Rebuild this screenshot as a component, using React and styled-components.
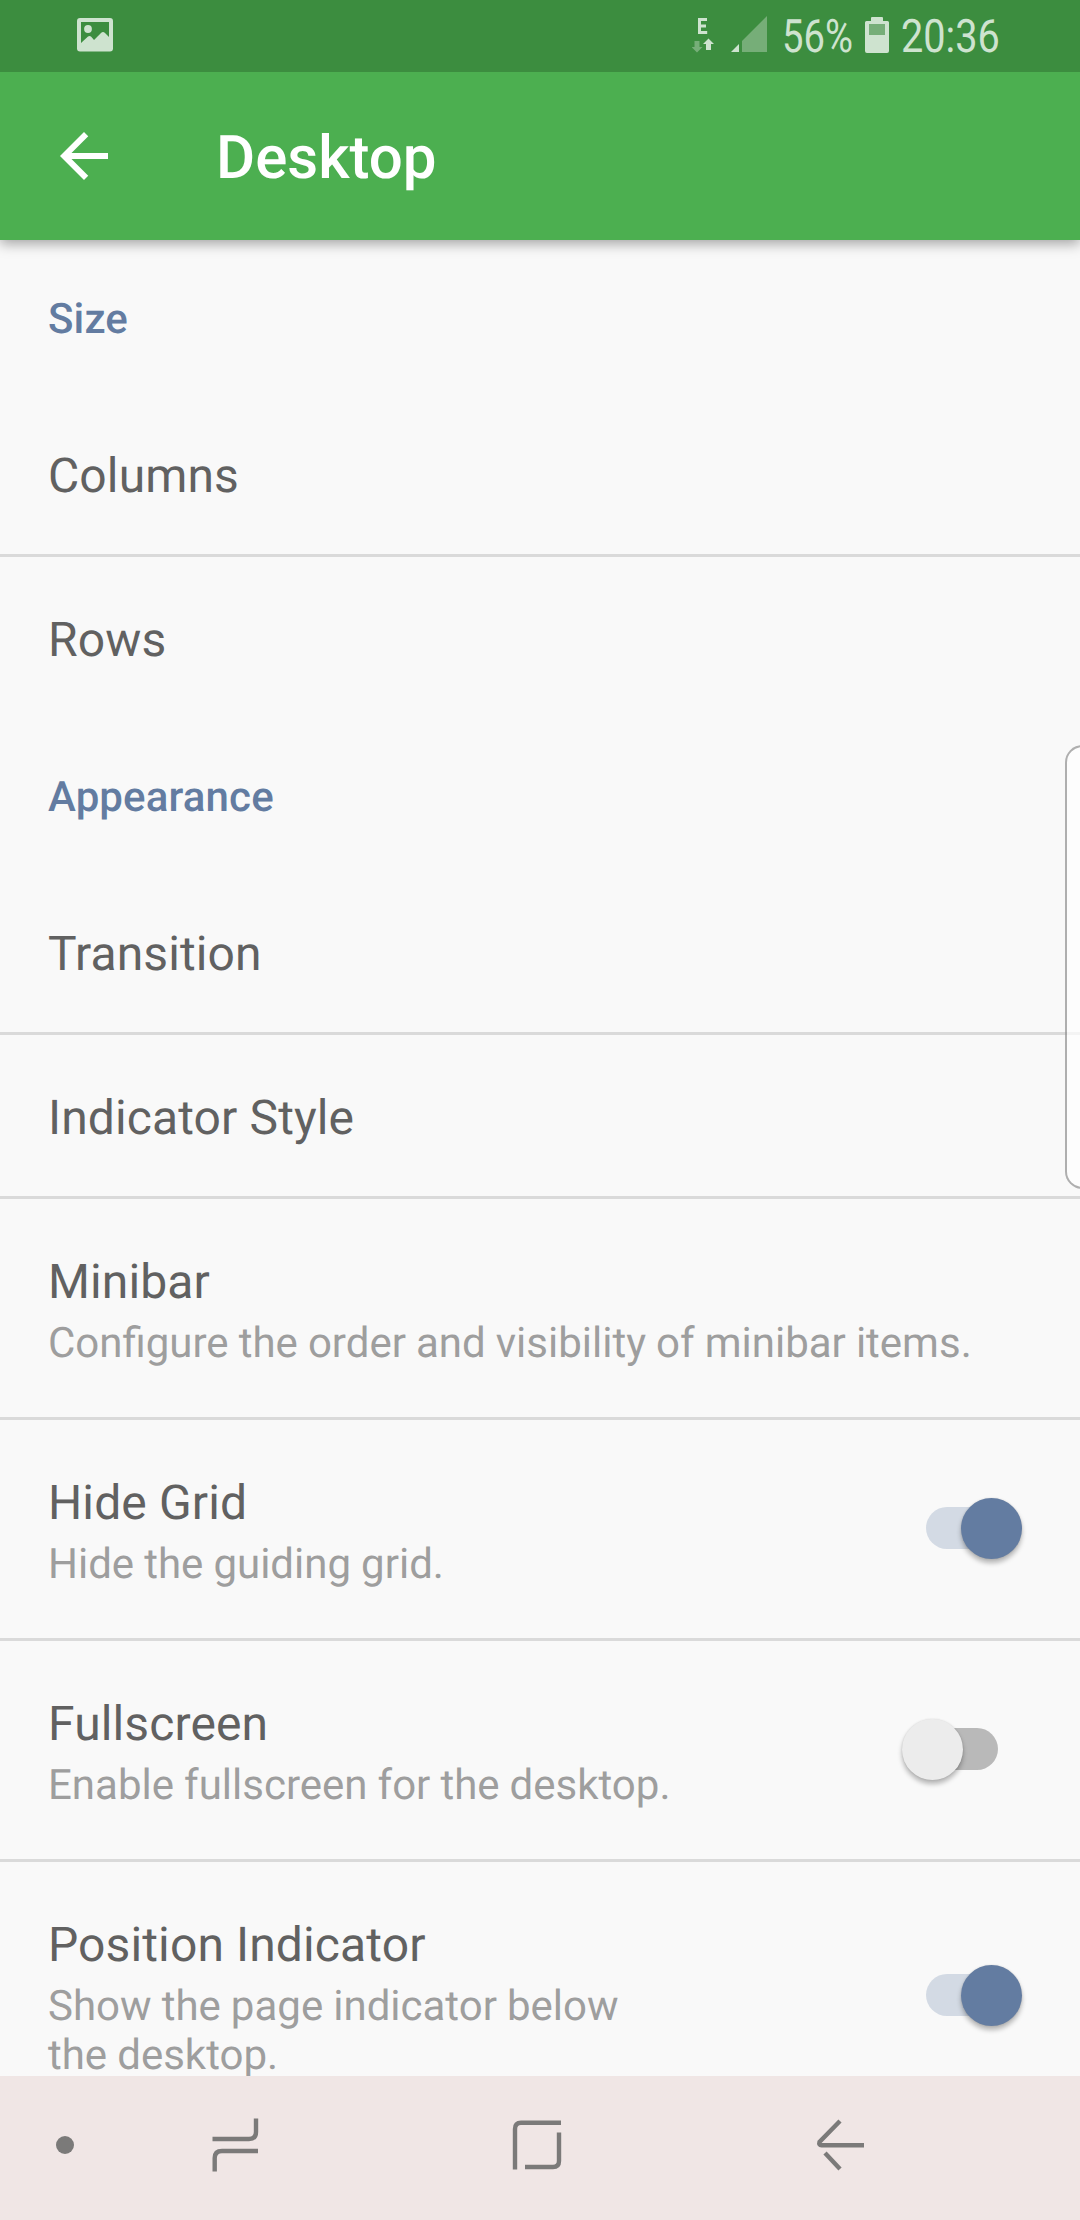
import React from 'react';
import styled, { createGlobalStyle } from 'styled-components';

const Global = createGlobalStyle`
  *, *::before, *::after { box-sizing: border-box; }
  body {
    margin: 0;
    background: #f9f9f9;
    font-family: Roboto, 'Liberation Sans', sans-serif;
    text-rendering: geometricPrecision;
  }
`;

const Screen = styled.div`
  position: relative;
  display: flex;
  flex-direction: column;
  width: 1080px;
  height: 2220px;
  overflow: hidden;
  background: #f9f9f9;
`;

const StatusBar = styled.header`
  display: flex;
  flex: none;
  align-items: flex-start;
  justify-content: space-between;
  height: 72px;
  padding: 0 81px 0 77px;
  background: #3c8d3f;
`;

const StatusGroup = styled.div`
  display: flex;
  align-items: flex-start;
  height: 72px;
`;

const StatusIcon = styled.svg`
  display: block;
  flex: none;
  width: ${p => p.width}px;
  height: 72px;
  margin-right: ${p => p.$gap || 0}px;
`;

const StatusText = styled.span`
  display: block;
  width: ${p => p.$width}px;
  margin-right: ${p => p.$gap || 0}px;
  padding-top: 10px;
  color: #cee3cf;
  font-size: 46px;
  line-height: 54px;
  white-space: nowrap;
  transform: scaleX(${p => p.$squeeze});
  transform-origin: left center;
`;

const AppBar = styled.div`
  position: relative;
  z-index: 1;
  display: flex;
  flex: none;
  align-items: center;
  height: 168px;
  padding: 0 48px;
  background: #4caf50;
  box-shadow: 0 4px 12px rgba(0, 0, 0, 0.34);
  clip-path: inset(0 0 -30px 0);
`;

const BackIcon = styled.svg`
  display: block;
  width: 72px;
  height: 72px;
  margin-right: 96px;
  fill: #fff;
`;

const Title = styled.h1`
  margin: 4px 0 0;
  color: #fff;
  font-size: 60px;
  font-weight: 500;
  line-height: 70px;
`;

const Content = styled.main`
  flex: 1;
  min-height: 0;
  overflow: hidden;
`;

const Category = styled.h2`
  height: 153px;
  margin: 0;
  padding: 55px 48px 0;
  color: #637ca1;
  font-size: 42px;
  font-weight: 500;
  line-height: 49px;
  letter-spacing: 0.14px;
`;

const Item = styled.div`
  display: flex;
  align-items: center;
  justify-content: space-between;
  box-sizing: content-box;
  height: ${p => p.$height}px;
  padding: 0 48px;
  border-top: ${p => (p.$first ? 'none' : '3px solid #dadada')};
`;

const Labels = styled.div`
  align-self: flex-start;
  padding-top: 54px;
`;

const ItemTitle = styled.div`
  color: #616161;
  font-size: 48px;
  line-height: 57px;
  letter-spacing: 0.12px;
`;

const Summary = styled.div`
  max-width: ${p => (p.$narrow ? '600px' : 'none')};
  margin-top: 9px;
  color: #9e9e9e;
  font-size: 42px;
  line-height: 49px;
  word-spacing: -0.35px;
`;

const Track = styled.div`
  display: flex;
  align-items: center;
  justify-content: ${p => (p.$on ? 'flex-end' : 'flex-start')};
  width: 72px;
  height: 42px;
  margin: 0 34px 2px 0;
  border-radius: 21px;
  background: ${p => (p.$on ? '#d3dae4' : '#b9b9b9')};
`;

const Thumb = styled.div`
  flex: none;
  width: 61px;
  height: 61px;
  margin: 0 -24px;
  border-radius: 50%;
  background: ${p => (p.$on ? '#637ca1' : '#ececec')};
  box-shadow: 0 4px 5px rgba(0, 0, 0, 0.28), 0 0 2px rgba(0, 0, 0, 0.12);
`;

const EdgeHandle = styled.div`
  position: absolute;
  top: 745px;
  right: -20px;
  width: 35px;
  height: 444px;
  border: 2px solid rgba(150, 150, 150, 0.75);
  border-radius: 20px;
  background: rgba(255, 255, 255, 0.7);
  background-clip: padding-box;
`;

const NavBar = styled.nav`
  flex: none;
  height: 144px;
  background: #f0e6e5;
`;

const NavIcons = styled.svg`
  display: block;
  fill: none;
  stroke: #7b7a79;
  stroke-width: 4.4;
`;

function Preference({ title, summary, narrow, height = 161, first, toggle }) {
  const on = toggle === 'on';
  return (
    <Item $height={height} $first={first}>
      <Labels>
        <ItemTitle>{title}</ItemTitle>
        {summary && <Summary $narrow={narrow}>{summary}</Summary>}
      </Labels>
      {toggle && <Track $on={on}><Thumb $on={on} /></Track>}
    </Item>
  );
}

export default function App() {
  return (
    <Screen>
      <Global />
      <StatusBar>
        <StatusIcon width={36} viewBox="0 0 36 72" fill="#cee3cf">
          <path fillRule="evenodd" d="M3 18H33Q36 18 36 21V48.500Q36 51.500 33 51.500H3Q0 51.500 0 48.500V21Q0 18 3 18ZM4 22V43L11 36.5Q12.5 35.3 14 36.5L17 40L24 33Q26 31.200 28 33L32 37V22Z" />
          <circle cx="11" cy="29" r="3.900" />
        </StatusIcon>
        <StatusGroup>
          <StatusIcon width={22} $gap={17} viewBox="0 0 22 72" fill="#cee3cf">
            <path d="M6 18H15V21H9V24.500H14V27.500H9V31H15.200V34H6Z" />
            <path fill="#76ae78" d="M2.500 41H7.500V47H10.500L5 52.500L-.5 47H2.500Z" />
            <path d="M14 50V44H11L16.500 38.500L22 44H19V50Z" />
          </StatusIcon>
          <StatusIcon width={36} $gap={15} viewBox="0 0 36 72">
            <path fill="#cee3cf" d="M0 52L8 44V52Z" />
            <path fill="#76ae78" d="M11 52V41L36 16V52Z" />
          </StatusIcon>
          <StatusText $width={70} $gap={13} $squeeze={0.83}>56%</StatusText>
          <StatusIcon width={24} $gap={12} viewBox="0 0 24 72">
            <path fill="#cee3cf" d="M7 17H17Q18 17 18 18V21H22.500Q24 21 24 22.500V51Q24 53 22 53H2Q0 53 0 51V22.500Q0 21 1.500 21H6V18Q6 17 7 17Z" />
            <path fill="#76ae78" d="M4 24H20V35H4Z" />
          </StatusIcon>
          <StatusText $width={98} $squeeze={0.862}>20:36</StatusText>
        </StatusGroup>
      </StatusBar>
      <AppBar>
        <BackIcon viewBox="0 0 24 24">
          <path d="M20 11H7.830l5.590-5.590L12 4l-8 8 8 8 1.410-1.410L7.830 13H20v-2z" />
        </BackIcon>
        <Title>Desktop</Title>
      </AppBar>
      <Content>
        <Category>Size</Category>
        <Preference title="Columns" first />
        <Preference title="Rows" />
        <Category>Appearance</Category>
        <Preference title="Transition" first />
        <Preference title="Indicator Style" />
        <Preference title="Minibar" height={218} summary="Configure the order and visibility of minibar items." />
        <Preference title="Hide Grid" height={218} summary="Hide the guiding grid." toggle="on" />
        <Preference title="Fullscreen" height={218} summary="Enable fullscreen for the desktop." toggle="off" />
        <Preference title="Position Indicator" height={268} summary="Show the page indicator below the desktop." narrow toggle="on" />
      </Content>
      <NavBar>
        <NavIcons width="1080" height="144" viewBox="0 2076 1080 144">
          <circle cx="65" cy="2145" r="9" fill="#7b7a79" stroke="none" />
          <path d="M212.500 2139H249Q256 2139 256 2132V2118.500" />
          <path d="M258 2151H222Q214.700 2151 214.700 2158V2171.500" />
          <path d="M515 2169.500V2129Q515 2122.700 521 2122.700H561" />
          <path d="M559 2132.500V2161Q559 2167 553 2167H525" />
          <path d="M840 2121L819.500 2142Q818.500 2145.200 821.500 2145.200H864" />
          <path d="M825 2153L840 2169" />
        </NavIcons>
      </NavBar>
      <EdgeHandle />
    </Screen>
  );
}
